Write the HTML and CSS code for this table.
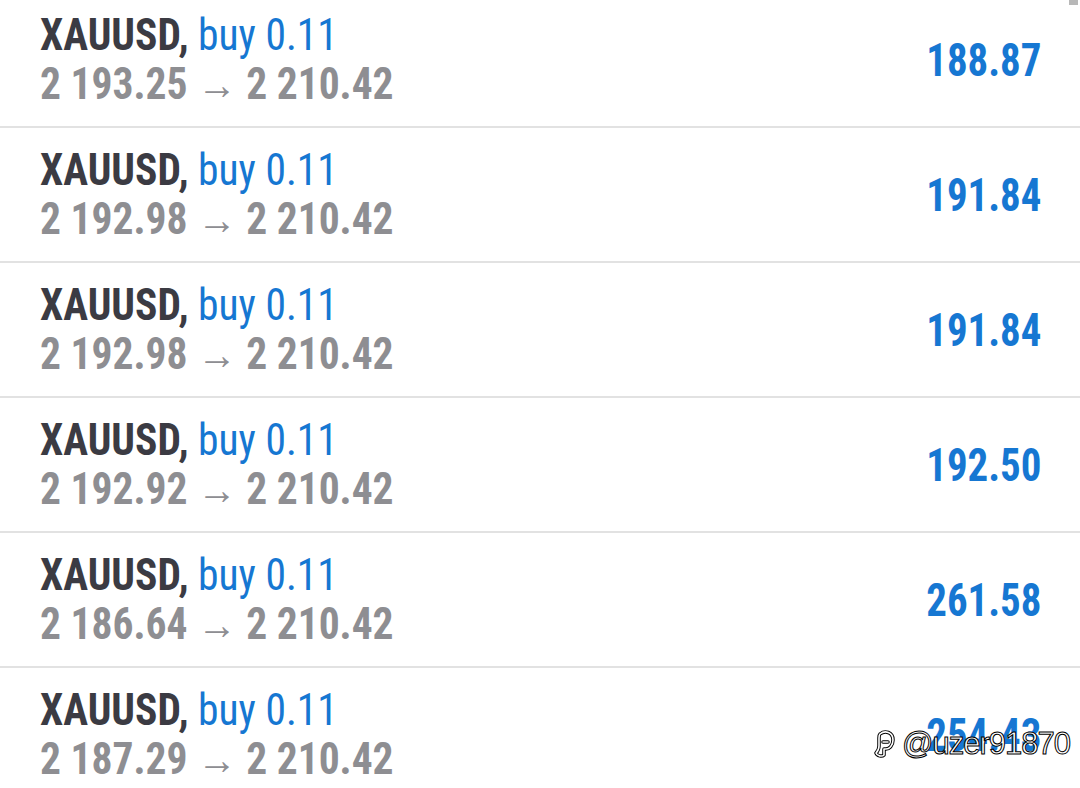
FILE: index.html
```html
<!DOCTYPE html>
<html>
<head>
<meta charset="utf-8">
<link rel="stylesheet" href="styles.css">
</head>
<body>
<div class="list">
  <div class="row"><div class="info"><div class="l1"><span class="sym">XAUUSD,</span> <span class="type">buy 0.11</span></div><div class="l2">2 193.25 <span class="arr">→</span> 2 210.42</div></div><div class="profit">188.87</div></div>
  <div class="row"><div class="info"><div class="l1"><span class="sym">XAUUSD,</span> <span class="type">buy 0.11</span></div><div class="l2">2 192.98 <span class="arr">→</span> 2 210.42</div></div><div class="profit">191.84</div></div>
  <div class="row"><div class="info"><div class="l1"><span class="sym">XAUUSD,</span> <span class="type">buy 0.11</span></div><div class="l2">2 192.98 <span class="arr">→</span> 2 210.42</div></div><div class="profit">191.84</div></div>
  <div class="row"><div class="info"><div class="l1"><span class="sym">XAUUSD,</span> <span class="type">buy 0.11</span></div><div class="l2">2 192.92 <span class="arr">→</span> 2 210.42</div></div><div class="profit">192.50</div></div>
  <div class="row"><div class="info"><div class="l1"><span class="sym">XAUUSD,</span> <span class="type">buy 0.11</span></div><div class="l2">2 186.64 <span class="arr">→</span> 2 210.42</div></div><div class="profit">261.58</div></div>
  <div class="row"><div class="info"><div class="l1"><span class="sym">XAUUSD,</span> <span class="type">buy 0.11</span></div><div class="l2">2 187.29 <span class="arr">→</span> 2 210.42</div></div><div class="profit">254.43</div></div>
</div>
<div class="watermark">
  <svg class="wm-logo" width="26" height="30" viewBox="0 0 26 30"><path d="M8 5 C13 1 21 3 21 11 C21 17 17 20 14 20 L12 20 L12 26 C10 28 5 27 4 24 C6 22 7 20 7 17 L7 9 C7 7 7 6 8 5 Z M11 13 L16 13" fill="none" stroke="#000" stroke-width="3.5" stroke-linejoin="round" stroke-linecap="round"/><path d="M8 5 C13 1 21 3 21 11 C21 17 17 20 14 20 L12 20 L12 26 C10 28 5 27 4 24 C6 22 7 20 7 17 L7 9 C7 7 7 6 8 5 Z M11 13 L16 13" fill="none" stroke="#fff" stroke-width="1.6" stroke-linejoin="round" stroke-linecap="round"/></svg>
  <span class="wm-text">@uzer91870</span>
</div>
<div class="corner"></div>
</body>
</html>
```
FILE: styles.css
```css
html, body {
  margin: 0;
  padding: 0;
  background: #ffffff;
  overflow: hidden;
}
body {
  width: 1080px;
  height: 788px;
  position: relative;
  font-family: "Roboto Condensed", Roboto, "Liberation Sans", sans-serif;
}
.list {
  margin-top: -7px;
}
.row {
  display: flex;
  align-items: center;
  justify-content: space-between;
  height: 135px;
  box-sizing: border-box;
  padding: 0 39px 0 40px;
  border-bottom: 2px solid #e2e2e2;
}
.info {
  display: flex;
  flex-direction: column;
  transform: scaleX(0.943);
  transform-origin: left center;
}
.l1, .l2 {
  font-size: 44px;
  line-height: 49px;
  white-space: nowrap;
}
.sym {
  font-weight: 700;
  color: #3b3b43;
}
.type {
  font-weight: 400;
  color: #1677d2;
}
.l2 {
  font-weight: 700;
  color: #8e8e92;
}
.arr {
  font-weight: 400;
  font-size: 42px;
}
.profit {
  font-size: 47px;
  font-weight: 700;
  color: #1677d2;
  transform: scaleX(0.87);
  transform-origin: right center;
}
.watermark {
  position: absolute;
  left: 872px;
  top: 726px;
  display: flex;
  align-items: center;
  gap: 4px;
}
.wm-text {
  font-family: "Liberation Sans", sans-serif;
  font-size: 31px;
  color: #ffffff;
  -webkit-text-stroke: 1px #000;
  letter-spacing: -1px;
}
.corner {
  position: absolute;
  right: 2px;
  top: 0;
  width: 9px;
  height: 5px;
  background: #b8b8b8;
}
```
